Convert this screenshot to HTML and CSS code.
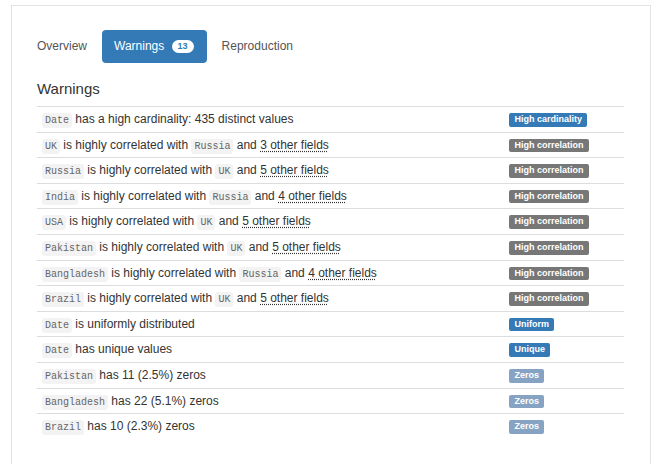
FILE: index.html
```html
<!DOCTYPE html>
<html>
<head>
<meta charset="utf-8">
<link rel="stylesheet" href="styles.css">
</head>
<body>
<div class="card">
  <ul class="pills">
    <li class="pill">Overview</li>
    <li class="pill active">Warnings <span class="count">13</span></li>
    <li class="pill">Reproduction</li>
  </ul>
  <div class="section">
    <h2 class="title">Warnings</h2>
    <table class="warnings">
      <tr><td><code>Date</code> has a high cardinality: 435 distinct values</td><td class="tag"><span class="label primary">High cardinality</span></td></tr>
      <tr><td><code>UK</code> is highly correlated with <code>Russia</code> and <abbr>3 other fields</abbr></td><td class="tag"><span class="label default">High correlation</span></td></tr>
      <tr><td><code>Russia</code> is highly correlated with <code>UK</code> and <abbr>5 other fields</abbr></td><td class="tag"><span class="label default">High correlation</span></td></tr>
      <tr><td><code>India</code> is highly correlated with <code>Russia</code> and <abbr>4 other fields</abbr></td><td class="tag"><span class="label default">High correlation</span></td></tr>
      <tr><td><code>USA</code> is highly correlated with <code>UK</code> and <abbr>5 other fields</abbr></td><td class="tag"><span class="label default">High correlation</span></td></tr>
      <tr><td><code>Pakistan</code> is highly correlated with <code>UK</code> and <abbr>5 other fields</abbr></td><td class="tag"><span class="label default">High correlation</span></td></tr>
      <tr><td><code>Bangladesh</code> is highly correlated with <code>Russia</code> and <abbr>4 other fields</abbr></td><td class="tag"><span class="label default">High correlation</span></td></tr>
      <tr><td><code>Brazil</code> is highly correlated with <code>UK</code> and <abbr>5 other fields</abbr></td><td class="tag"><span class="label default">High correlation</span></td></tr>
      <tr><td><code>Date</code> is uniformly distributed</td><td class="tag"><span class="label primary">Uniform</span></td></tr>
      <tr><td><code>Date</code> has unique values</td><td class="tag"><span class="label primary">Unique</span></td></tr>
      <tr><td><code>Pakistan</code> has 11 (2.5%) zeros</td><td class="tag"><span class="label info">Zeros</span></td></tr>
      <tr><td><code>Bangladesh</code> has 22 (5.1%) zeros</td><td class="tag"><span class="label info">Zeros</span></td></tr>
      <tr><td><code>Brazil</code> has 10 (2.3%) zeros</td><td class="tag"><span class="label info">Zeros</span></td></tr>
    </table>
  </div>
</div>
</body>
</html>
```
FILE: styles.css
```css
html, body {
  margin: 0;
  padding: 0;
  overflow: hidden;
  background: #fff;
}
body {
  font-family: "Liberation Sans", Arial, sans-serif;
  font-size: 12px;
  color: #333;
}
.card {
  box-sizing: border-box;
  width: 640px;
  margin: 5px 0 0 11px;
  border: 1px solid #e3e3e3;
  padding: 24px 14px 40px 13px;
}
.pills {
  list-style: none;
  margin: 0;
  padding: 0;
  display: flex;
  gap: 3px;
}
.pill {
  padding: 8px 12px;
  line-height: 17px;
  color: #555;
  border-radius: 4px;
}
.pill.active {
  background: #337ab7;
  color: #fff;
  padding-right: 13px;
}
.count {
  display: inline-block;
  background: #fff;
  color: #337ab7;
  font-size: 9px;
  font-weight: bold;
  line-height: 1;
  padding: 2px 6px;
  border-radius: 7px;
  margin-left: 4px;
  vertical-align: 1px;
}
.section {
  padding: 0 12px;
}
.title {
  font-size: 15px;
  font-weight: normal;
  line-height: 20px;
  margin: 15.5px 0 7.5px;
  color: #333;
}
.warnings {
  width: 100%;
  border-collapse: collapse;
}
.warnings td {
  border-top: 1px solid #ddd;
  padding: 4px 5px 3.6px;
  line-height: 17px;
  vertical-align: top;
}
.warnings td.tag {
  width: 110px;
}
code {
  font-family: "Liberation Mono", "DejaVu Sans Mono", monospace;
  font-size: 10px;
  line-height: 1;
  color: #666;
  background: #f3f3f3;
  padding: 2px 3px;
  border-radius: 3px;
}
abbr {
  text-decoration: underline dotted;
  text-underline-offset: 2px;
}
.label {
  display: inline-block;
  font-size: 9px;
  font-weight: bold;
  line-height: 1;
  color: #fff;
  padding: 2px 5.4px 2.7px;
  border-radius: 2px;
  vertical-align: top;
  margin-top: 2px;
}
.label.primary { background: #337ab7; }
.label.default { background: #777; }
.label.info { background: #87a3c3; }
```
